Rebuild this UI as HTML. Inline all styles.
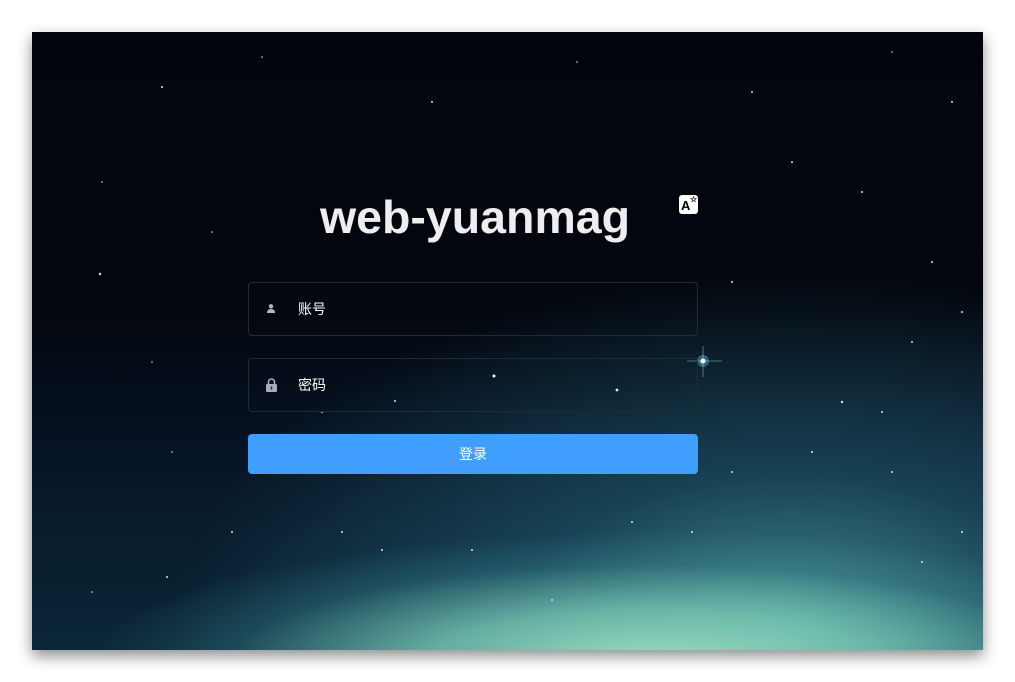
<!DOCTYPE html>
<html><head><meta charset="utf-8"><style>
html,body{margin:0;padding:0;width:1015px;height:682px;background:#fff;overflow:hidden}
.scr{position:absolute;left:32px;top:32px;width:951px;height:618px;overflow:hidden;
box-shadow:0 6px 14px rgba(0,0,0,.45);
background:
radial-gradient(ellipse 560px 130px at 620px 630px, rgba(160,225,195,.95) 0%, rgba(120,200,180,.8) 40%, rgba(60,140,150,.3) 75%, rgba(20,60,90,0) 100%),
radial-gradient(ellipse 620px 360px at 760px 600px, rgba(80,160,160,.85) 0%, rgba(40,105,125,.5) 45%, rgba(10,30,55,0) 100%),
linear-gradient(180deg,#03050d 0%,#03070f 45%,#061425 68%,#0b2738 100%);}
.title{position:absolute;left:288px;top:158px;font:bold 46.5px "Liberation Sans",sans-serif;color:#eee}
.lang{position:absolute;left:647px;top:163px;width:19px;height:19px;background:#fff;border-radius:3px;font:bold 13px "Liberation Sans",sans-serif;color:#000;}
.lang b{position:absolute;left:2px;top:3px}
.lang i{position:absolute;left:11px;top:0px;font-size:8px;font-style:normal}
.inp{position:absolute;left:216px;width:448px;height:52px;border:1px solid #222a36;border-radius:4px;background:transparent}
.inp span{position:absolute;left:49px;top:16px;font:14px "Liberation Sans","Noto Sans CJK SC",sans-serif;color:#fff}
.btn{position:absolute;left:216px;top:402px;width:450px;height:40px;background:#409eff;border-radius:4px;color:#fff;text-align:center;font:14px/40px "Liberation Sans","Noto Sans CJK SC",sans-serif}
</style></head><body>
<div class="scr">
<svg width="951" height="618" style="position:absolute;left:0;top:0">
<g fill="#cfe3ff">
<circle cx="130" cy="55" r="1"/><circle cx="230" cy="25" r=".8"/><circle cx="400" cy="70" r="1"/><circle cx="545" cy="30" r=".8"/><circle cx="720" cy="60" r="1"/><circle cx="860" cy="20" r=".8"/><circle cx="920" cy="70" r="1"/><circle cx="70" cy="150" r=".8"/><circle cx="68" cy="242" r="1.2"/><circle cx="180" cy="200" r=".8"/><circle cx="760" cy="130" r="1"/><circle cx="830" cy="160" r="1"/><circle cx="900" cy="230" r="1"/><circle cx="120" cy="330" r=".8"/><circle cx="290" cy="380" r="1"/><circle cx="363" cy="369" r="1"/><circle cx="462" cy="344" r="1.5" fill="#dfe"/><circle cx="585" cy="358" r="1.4" fill="#eed"/><circle cx="810" cy="370" r="1.2"/><circle cx="850" cy="380" r="1"/><circle cx="780" cy="420" r="1"/><circle cx="860" cy="440" r="1"/><circle cx="140" cy="420" r=".8"/><circle cx="200" cy="500" r="1"/><circle cx="135" cy="545" r="1"/><circle cx="310" cy="500" r="1"/><circle cx="350" cy="518" r="1"/><circle cx="440" cy="518" r="1"/><circle cx="520" cy="568" r="1"/><circle cx="600" cy="490" r="1"/><circle cx="660" cy="500" r="1"/><circle cx="700" cy="440" r="1"/><circle cx="890" cy="530" r="1"/><circle cx="930" cy="500" r="1"/><circle cx="60" cy="560" r=".8"/><circle cx="880" cy="310" r="1"/><circle cx="700" cy="250" r="1"/><circle cx="930" cy="280" r="1"/>
</g>
<g>
<circle cx="671" cy="329" r="6" fill="#7df" opacity=".35"/>
<circle cx="671" cy="329" r="2.5" fill="#fff"/>
<line x1="655" y1="329" x2="690" y2="329" stroke="#bfe" stroke-width=".8" opacity=".5"/>
<line x1="671" y1="314" x2="671" y2="345" stroke="#bfe" stroke-width=".8" opacity=".5"/>
</g>
</svg>
<div class="title">web-yuanmag</div>
<div class="lang"><b>A</b><i>☆</i></div>
<div class="inp" style="top:250px">
<svg style="position:absolute;left:18px;top:21px" width="8" height="9" viewBox="0 0 8 9"><circle cx="4" cy="2.3" r="2.2" fill="#b0b6c0"/><path d="M0 9 Q0 5 4 5 Q8 5 8 9Z" fill="#b0b6c0"/></svg>
<span>账号</span></div>
<div class="inp" style="top:326px">
<svg style="position:absolute;left:17px;top:19px" width="11" height="14" viewBox="0 0 11 14"><path d="M2.5 6V4a3 3 0 0 1 6 0v2" fill="none" stroke="#a8aeb8" stroke-width="1.6"/><rect x="0" y="6" width="11" height="8" rx="1" fill="#a8aeb8"/><rect x="4.8" y="8.5" width="1.4" height="3" fill="#222"/></svg>
<span>密码</span></div>
<div class="btn">登录</div>
</div>
</body></html>
